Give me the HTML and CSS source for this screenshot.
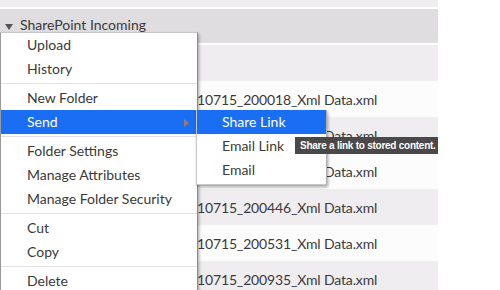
FILE: index.html
```html
<!DOCTYPE html>
<html lang="en">
<head>
  <meta charset="UTF-8">
  <title>SharePoint Incoming</title>
  <link rel="stylesheet" href="styles.css">
</head>
<body>
  <div class="page">
    <!-- File list -->
    <div class="list">
      <div class="row top"></div>
      <div class="row folder">
        <span class="caret"></span>
        <span>SharePoint Incoming</span>
      </div>
      <div class="row odd"></div>
      <div class="row even"><span class="name">10715_200018_Xml Data.xml</span></div>
      <div class="row odd"><span class="name">10715_200104_Xml Data.xml</span></div>
      <div class="row even"><span class="name">10715_200220_Xml Data.xml</span></div>
      <div class="row odd"><span class="name">10715_200446_Xml Data.xml</span></div>
      <div class="row even"><span class="name">10715_200531_Xml Data.xml</span></div>
      <div class="row odd"><span class="name">10715_200935_Xml Data.xml</span></div>
    </div>

    <!-- Context menu -->
    <ul class="menu">
      <li class="item">Upload</li>
      <li class="item">History</li>
      <li class="sep"></li>
      <li class="item">New Folder</li>
      <li class="item active">Send <span class="arrow"></span></li>
      <li class="sep"></li>
      <li class="item">Folder Settings</li>
      <li class="item">Manage Attributes</li>
      <li class="item">Manage Folder Security</li>
      <li class="sep"></li>
      <li class="item">Cut</li>
      <li class="item">Copy</li>
      <li class="sep"></li>
      <li class="item">Delete</li>
    </ul>

    <ul class="menu submenu">
      <li class="item active">Share Link</li>
      <li class="item">Email Link</li>
      <li class="item">Email</li>
    </ul>

    <div class="tooltip">Share a link to stored content.</div>
  </div>
</body>
</html>
```

FILE: styles.css
```css
body {
  margin: 0;
  font-family: Lato, "Noto Sans", sans-serif;
  font-size: 14px;
  color: #3a3a3a;
  background-color: #fff;
  overflow: hidden;
}
.page {
  position: relative;
  width: 500px;
  height: 290px;
}
.list {
  width: 438px;
  display: flex;
  flex-direction: column;
}
.row {
  height: 36px;
  display: flex;
  align-items: center;
  flex-shrink: 0;
}
.row.top {
  height: 7px;
  background-color: #efedef;
  margin-bottom: 2px;
}
.row.folder {
  height: 34px;
  background-color: #dfdddf;
  margin-bottom: 2px;
  padding-left: 5px;
  padding-bottom: 3px;
  box-sizing: border-box;
  gap: 7px;
}
.caret {
  width: 0;
  height: 0;
  border-left: 4px solid transparent;
  border-right: 4px solid transparent;
  border-top: 6px solid #555;
  margin-top: 4px;
}
.row.odd {
  background-color: #efedef;
}
.row.even {
  background-color: #fdfcfd;
}
.name {
  padding-left: 197px;
  letter-spacing: -0.15px;
}

/* Context menu */
.menu {
  position: absolute;
  left: 0;
  top: 32px;
  width: 198px;
  margin: 0;
  padding: 0;
  list-style: none;
  background-color: #fff;
  border: 1px solid #c6c6c6;
  border-left-color: #9a9a9a;
  border-right-color: #8a8a8a;
  box-sizing: border-box;
  box-shadow: 1px 2px 3px rgba(0, 0, 0, 0.35);
  color: #3a3a3a;
}
.item {
  height: 24px;
  line-height: 24px;
  padding-left: 26px;
  position: relative;
}
.item.active {
  background-color: #1a6ef4;
  color: #fff;
}
.sep {
  height: 5px;
  display: flex;
  align-items: center;
}
.sep::after {
  content: "";
  flex: 1;
  height: 1px;
  background-color: #e3e3e3;
}
.arrow {
  position: absolute;
  right: 8px;
  top: 9px;
  border-top: 4px solid transparent;
  border-bottom: 4px solid transparent;
  border-left: 5px solid #8c8072;
}
.submenu {
  left: 196px;
  top: 110px;
  width: 131px;
  padding-bottom: 2px;
  border-left-color: #c6c6c6;
  border-right-color: #b0b0b0;
  border-top: none;
}
.submenu .item {
  padding-left: 25px;
}

/* Tooltip */
.tooltip {
  position: absolute;
  left: 295px;
  top: 137px;
  width: 143px;
  height: 17px;
  line-height: 17px;
  padding-left: 5px;
  box-sizing: border-box;
  background-color: #4a4849;
  color: #fff;
  font-family: "Liberation Sans", Arial, sans-serif;
  font-weight: bold;
  font-size: 10px;
  letter-spacing: -0.25px;
  white-space: nowrap;
  overflow: hidden;
}
```
